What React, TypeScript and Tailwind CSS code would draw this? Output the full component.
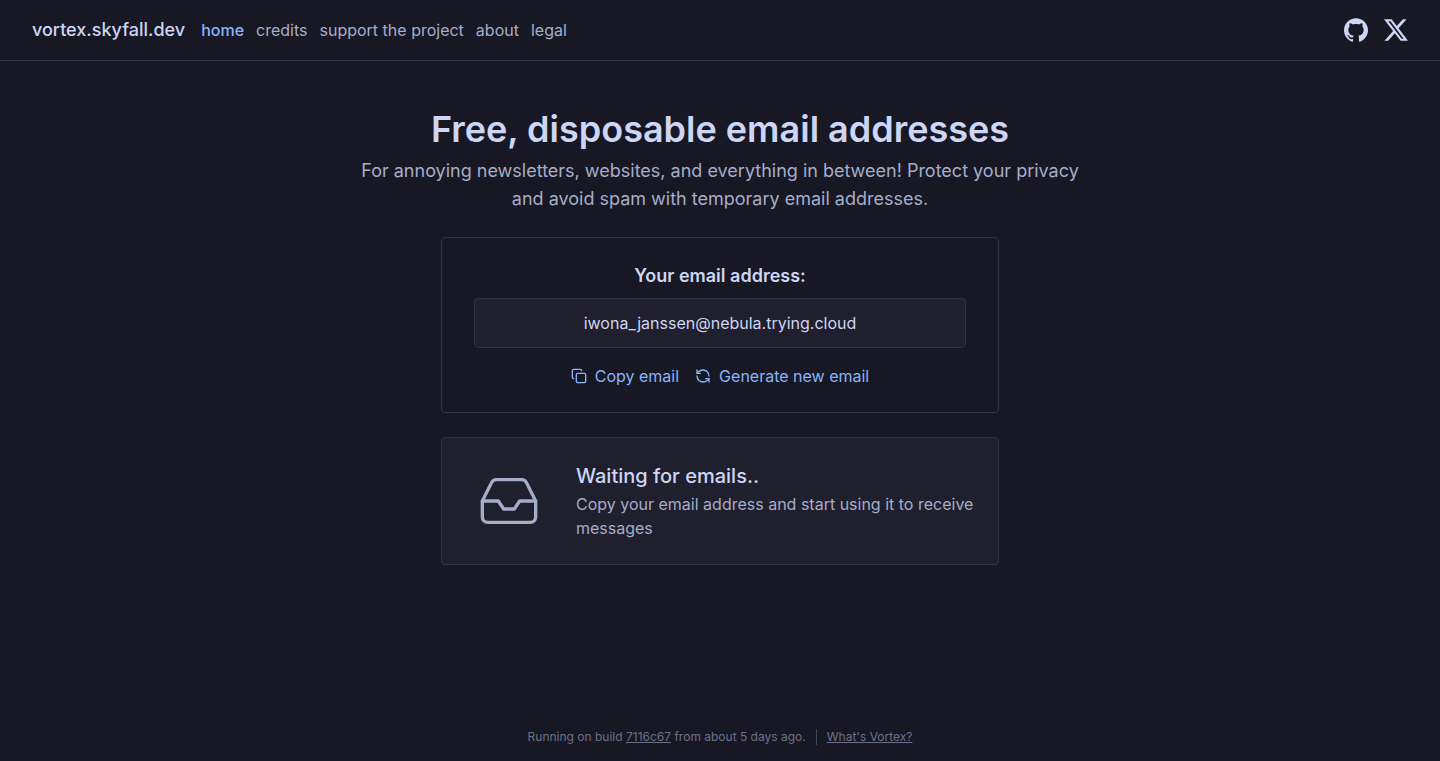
import React, { useState } from "react";
import { Copy, Inbox, RefreshCcw } from "lucide-react";
import { SiGithub, SiX } from "react-icons/si";

const NAV_LINKS = ["home", "credits", "support the project", "about", "legal"];

function Header() {
  return (
    <header className="flex min-h-[61px] items-center justify-between border-b border-[#313244] px-8">
      <div className="flex items-center gap-4">
        <a href="#home" className="text-lg font-medium">
          vortex.skyfall.dev
        </a>
        <nav className="flex gap-3 text-[#a6adc8]">
          {NAV_LINKS.map((link) => (
            <a
              key={link}
              href={`#${link.replaceAll(" ", "-")}`}
              className={link === "home" ? "font-medium text-[#89b4fa]" : ""}
            >
              {link}
            </a>
          ))}
        </nav>
      </div>

      <div className="flex gap-4">
        <a href="#github" aria-label="GitHub">
          <SiGithub size={24} />
        </a>
        <a href="#x" aria-label="X">
          <SiX size={24} />
        </a>
      </div>
    </header>
  );
}

function EmailCard() {
  const [email] = useState("iwona_janssen@nebula.trying.cloud");

  return (
    <section className="flex w-full flex-col items-center rounded border border-[#313244] px-8 py-6">
      <label htmlFor="email" className="text-lg font-semibold">
        Your email address:
      </label>
      <input
        id="email"
        readOnly
        value={email}
        className="mt-2 w-full rounded border border-[#313244] bg-[#201f2d] px-4 py-3 text-center outline-none"
      />
      <div className="mt-4 flex gap-4 text-[#89b4fa]">
        <button
          type="button"
          className="flex items-center gap-2"
          onClick={() => navigator.clipboard.writeText(email)}
        >
          <Copy size={16} />
          Copy email
        </button>
        <button type="button" className="flex items-center gap-2">
          <RefreshCcw size={16} />
          Generate new email
        </button>
      </div>
    </section>
  );
}

function EmptyInbox() {
  return (
    <section className="flex w-full items-center gap-[35px] rounded border border-[#313244] bg-[#201f2d] py-6 pr-6 pl-[35px]">
      <Inbox size={64} strokeWidth={1.25} className="shrink-0 text-[#a6adc8]" />
      <div className="flex flex-col gap-0.5">
        <h2 className="text-xl font-medium">Waiting for emails..</h2>
        <p className="text-[#a6adc8]">
          Copy your email address and start using it to receive messages
        </p>
      </div>
    </section>
  );
}

export default function App() {
  return (
    <div className="flex min-h-screen flex-col bg-[#181825] font-[Inter,sans-serif] text-[#cdd6f4]">
      <Header />

      <main className="flex flex-1 flex-col items-center px-4 pt-12">
        <h1 className="text-center text-4xl font-semibold">
          Free, disposable email addresses
        </h1>
        <p className="mt-2 max-w-[736px] text-center text-lg text-[#a6adc8]">
          For annoying newsletters, websites, and everything in between! Protect
          your privacy and avoid spam with temporary email addresses.
        </p>

        <div className="mt-6 flex w-full max-w-[558px] flex-col gap-6">
          <EmailCard />
          <EmptyInbox />
        </div>
      </main>

      <footer className="flex justify-center pb-4 text-xs text-[#6c7086]">
        <p className="pr-2.5">
          Running on build{" "}
          <a href="#build" className="underline">
            7116c67
          </a>{" "}
          from about 5 days ago.
        </p>
        <a href="#about-vortex" className="border-l border-[#45475a] pl-2.5 underline">
          What's Vortex?
        </a>
      </footer>
    </div>
  );
}
